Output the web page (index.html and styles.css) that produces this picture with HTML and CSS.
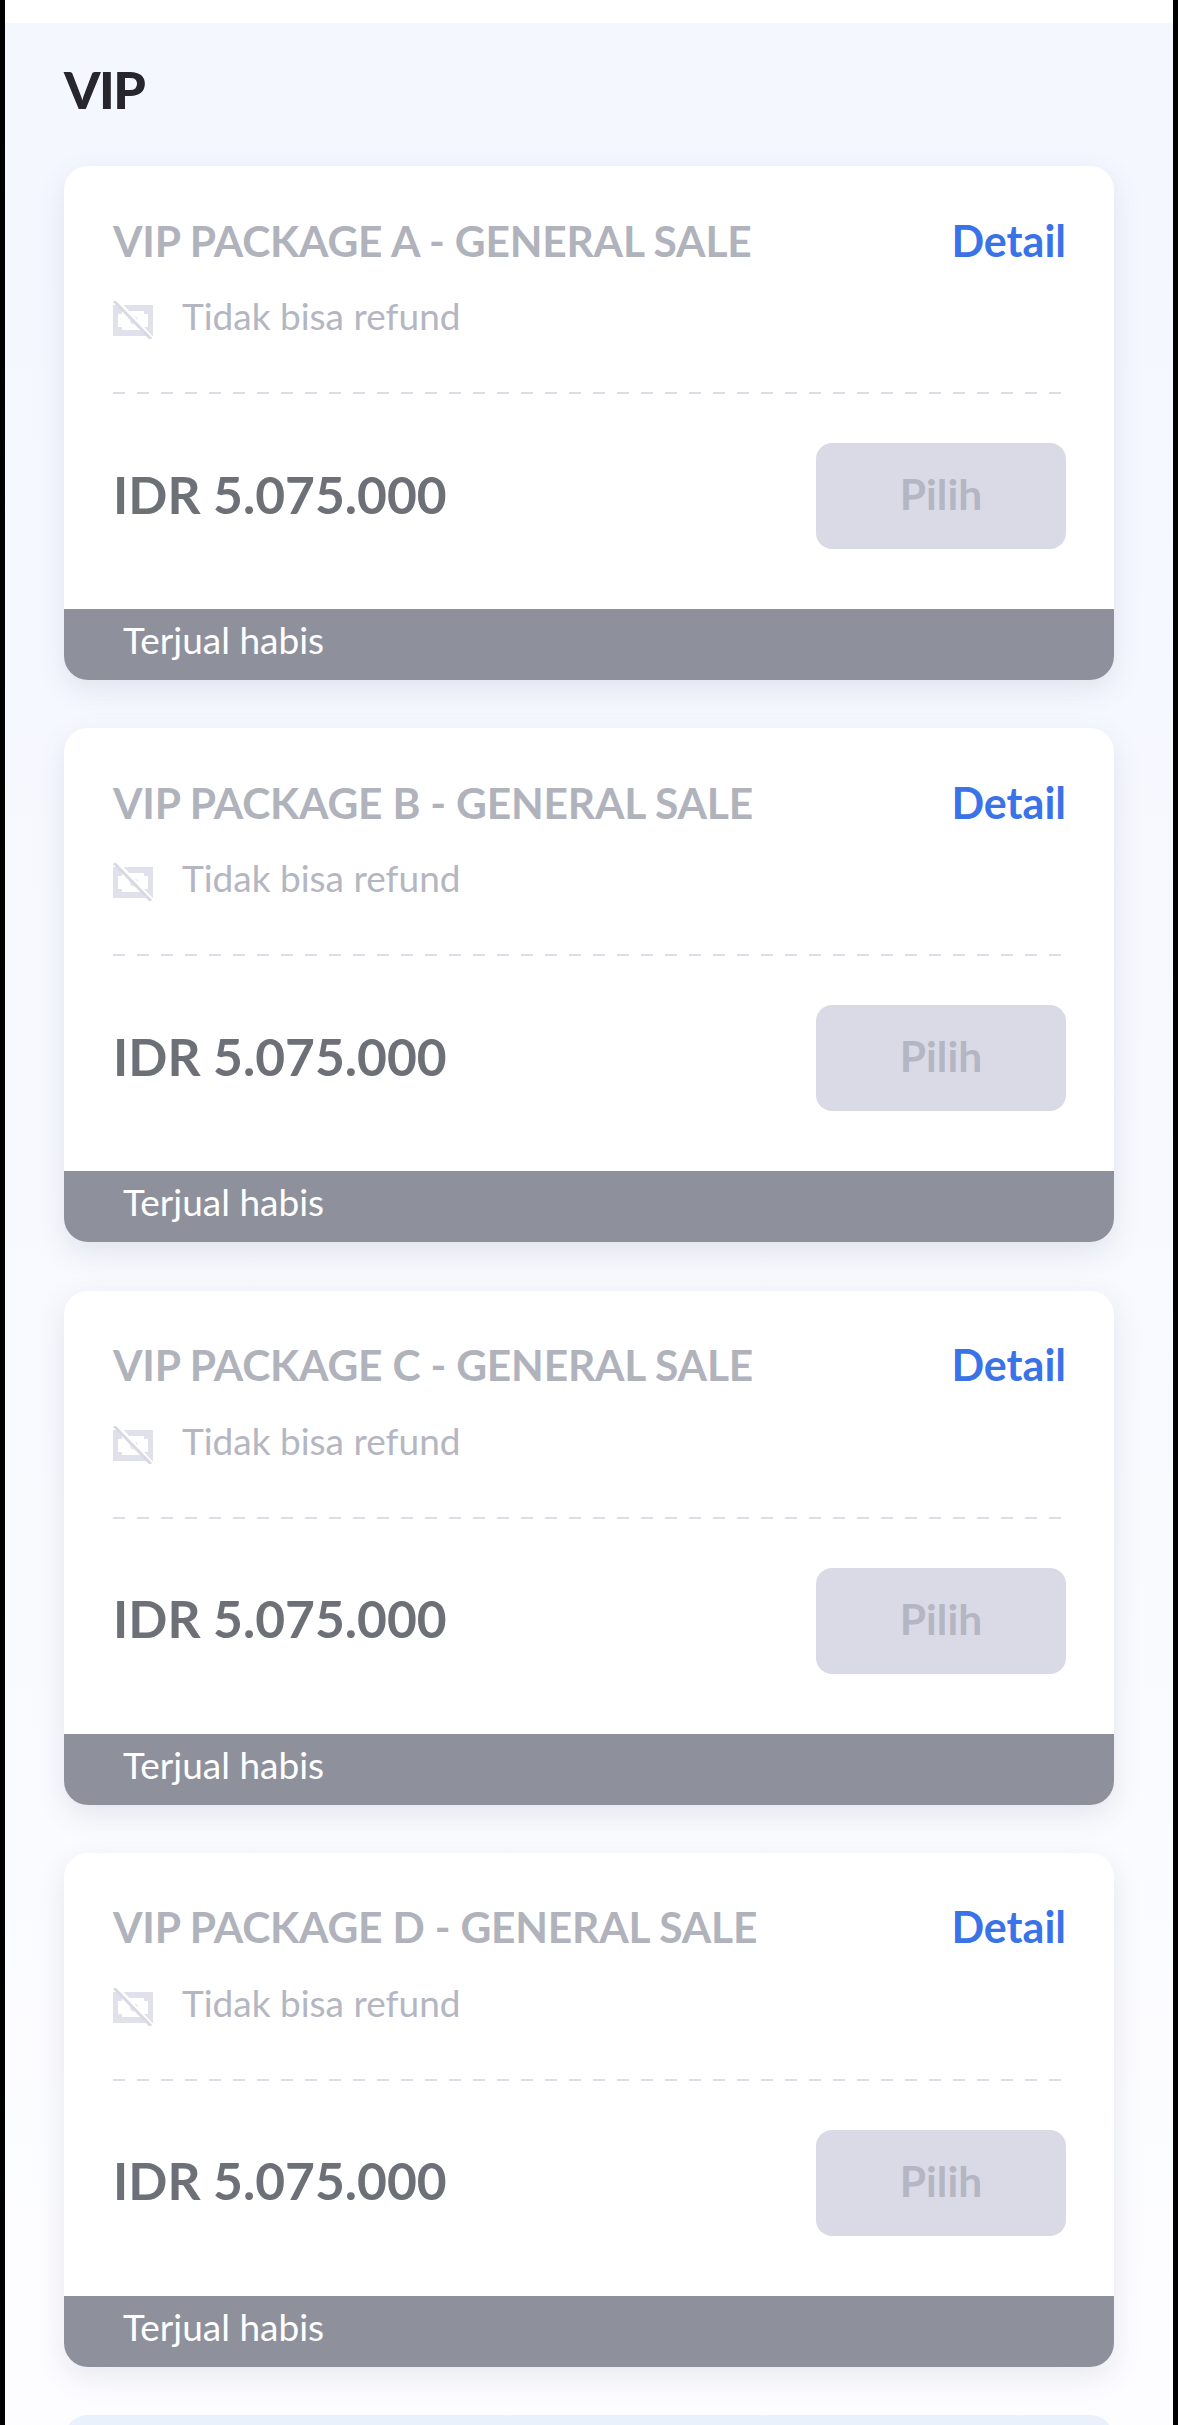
FILE: index.html
```html
<!DOCTYPE html>
<html lang="id">
<head>
  <meta charset="UTF-8">
  <meta name="viewport" content="width=device-width,initial-scale=1">
  <title>VIP</title>
  <link rel="stylesheet" href="styles.css">
</head>
<body>

  <svg class="defs" width="0" height="0">
    <symbol id="no-refund" viewBox="0 0 40 38">
      <rect x="0" y="4" width="40" height="31" fill="#e0e1ea"/>
      <path d="M9 10h22v3h4v13h-4v3H9v-3H5V13h4z" fill="#fff"/>
      <circle cx="21" cy="19.5" r="4" fill="#e6e7ee"/>
      <path d="M5 0l35 38" fill="none" stroke="#fff" stroke-width="3"/>
      <path d="M1 0l37 38" fill="none" stroke="#d8d9e4" stroke-width="3"/>
    </symbol>
  </svg>

  <div class="screen">
    <div class="top-bar"></div>
    <main class="content">
      <h2 class="section-title">VIP</h2>

      <div class="ticket">
        <div class="ticket-body">
          <div class="ticket-head">
            <h3>VIP PACKAGE A - GENERAL SALE</h3>
            <a href="#" class="detail">Detail</a>
          </div>
          <div class="refund">
            <svg class="refund-icon"><use href="#no-refund"></use></svg>
            <span>Tidak bisa refund</span>
          </div>
          <div class="dash"></div>
          <div class="ticket-price">
            <span class="price">IDR 5.075.000</span>
            <button type="button" class="pick" disabled>Pilih</button>
          </div>
        </div>
        <div class="sold-out">Terjual habis</div>
      </div>

      <div class="ticket">
        <div class="ticket-body">
          <div class="ticket-head">
            <h3>VIP PACKAGE B - GENERAL SALE</h3>
            <a href="#" class="detail">Detail</a>
          </div>
          <div class="refund">
            <svg class="refund-icon"><use href="#no-refund"></use></svg>
            <span>Tidak bisa refund</span>
          </div>
          <div class="dash"></div>
          <div class="ticket-price">
            <span class="price">IDR 5.075.000</span>
            <button type="button" class="pick" disabled>Pilih</button>
          </div>
        </div>
        <div class="sold-out">Terjual habis</div>
      </div>

      <div class="ticket">
        <div class="ticket-body">
          <div class="ticket-head">
            <h3>VIP PACKAGE C - GENERAL SALE</h3>
            <a href="#" class="detail">Detail</a>
          </div>
          <div class="refund">
            <svg class="refund-icon"><use href="#no-refund"></use></svg>
            <span>Tidak bisa refund</span>
          </div>
          <div class="dash"></div>
          <div class="ticket-price">
            <span class="price">IDR 5.075.000</span>
            <button type="button" class="pick" disabled>Pilih</button>
          </div>
        </div>
        <div class="sold-out">Terjual habis</div>
      </div>

      <div class="ticket">
        <div class="ticket-body">
          <div class="ticket-head">
            <h3>VIP PACKAGE D - GENERAL SALE</h3>
            <a href="#" class="detail">Detail</a>
          </div>
          <div class="refund">
            <svg class="refund-icon"><use href="#no-refund"></use></svg>
            <span>Tidak bisa refund</span>
          </div>
          <div class="dash"></div>
          <div class="ticket-price">
            <span class="price">IDR 5.075.000</span>
            <button type="button" class="pick" disabled>Pilih</button>
          </div>
        </div>
        <div class="sold-out">Terjual habis</div>
      </div>

      <div class="next-box"></div>
    </main>
  </div>

</body>
</html>
```

FILE: styles.css
```css
html, body { margin:0; height:100%; overflow:hidden; background:#000; }
body { font-family:Lato, "Open Sans", sans-serif; color:#26262c; }
.defs { position:absolute; }
.screen { margin:0 5px; height:2425px; display:flex; flex-direction:column; background:#fff; }
.top-bar { height:23px; background:#fff; flex:none; }
.content { flex:1; padding:0 59px; overflow:hidden; background:linear-gradient(#f4f7fe, #f7f9fe 50%, #fdfdff); }
.section-title { margin:32px 0 0; font-size:52px; line-height:68px; font-weight:900; letter-spacing:-1.5px; }
.ticket { margin-top:43px; border-radius:24px; background:#fff; box-shadow:0 10px 28px rgba(90,95,130,.13); overflow:hidden; }
.ticket + .ticket { margin-top:48.3px; }
.ticket-body { padding:50px 48px 60px 49px; }
.ticket-head { display:flex; justify-content:space-between; align-items:center; height:48px; }
.ticket-head h3 { margin:0; font-size:42.5px; font-weight:700; color:#b0b2bc; letter-spacing:-.2px; }
.detail { font-size:43px; font-weight:700; color:#3a72e8; text-decoration:none; }
.refund { display:flex; align-items:center; gap:29px; height:40px; margin-top:36px; font-size:37px; color:#b4b6c1; }
.refund span { padding-bottom:9px; }
.refund-icon { width:40px; height:38px; flex:none; }
.dash { height:2px; margin-top:52px; background:repeating-linear-gradient(90deg, #dcdee6 0 12px, transparent 12px 24px); }
.ticket-price { display:flex; justify-content:space-between; align-items:center; margin-top:49px; }
.price { padding-bottom:5px; font-size:51.5px; font-weight:700; color:#6e7078; }
.pick { width:250px; height:106px; padding:0 0 5px; border:none; border-radius:16px; background:#d9dae6; color:#b5b6c3; font:700 42.5px Lato, sans-serif; }
.sold-out { height:71px; padding-left:59px; background:#8e919c; color:#fff; font-size:37px; line-height:61px; }
.next-box { height:60px; margin-top:48.3px; border-radius:24px; background:#e8f1fc; }
```
